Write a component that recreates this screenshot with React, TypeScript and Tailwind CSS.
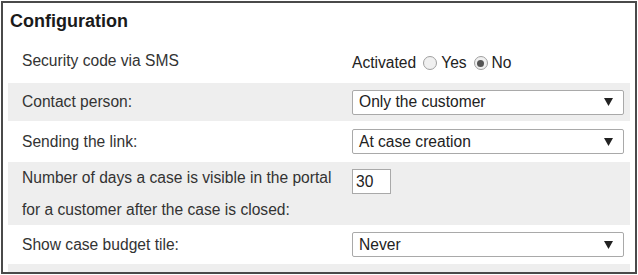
import React from 'react';

const Arrow = () => (
  <svg width="9" height="8" viewBox="0 0 9 8" className="shrink-0">
    <path d="M0 0 H9 L4.5 8 Z" fill="#222" />
  </svg>
);

const Select: React.FC<{ value: string }> = ({ value }) => (
  <div className="flex items-center justify-between w-[272px] h-[25px] pl-[6px] pr-[10px] bg-white border border-[#a9a9a9] rounded-[2px] text-[15.6px] text-[#222]">
    <span>{value}</span>
    <Arrow />
  </div>
);

const Radio: React.FC<{ checked?: boolean }> = ({ checked }) => (
  <span className="inline-flex items-center justify-center w-[14px] h-[14px] rounded-full border border-[#a0a0a0] bg-[#f0f0f0] ml-[7px] mr-[4px]">
    {checked && <span className="w-[7px] h-[7px] rounded-full bg-[#555]" />}
  </span>
);

export default function App() {
  return (
    <div className="w-[638px] h-[275px] bg-white p-px font-['Liberation_Sans',Arial,sans-serif]">
      <div className="h-[273px] border-2 border-[#4a4a4a] overflow-hidden">
        <div className="h-[36px] pl-[7px] pt-[5px] text-[18px] font-bold text-[#1a1a1a]">Configuration</div>
        <div className="mx-[5px] text-[15.6px] text-[#333]">
          <div className="flex h-[44px]">
            <div className="w-[344px] pl-[14px] pt-[10px]">Security code via SMS</div>
            <div className="flex items-center pt-[4px] text-[#222]">
              <span>Activated</span>
              <Radio />
              <span>Yes</span>
              <Radio checked />
              <span>No</span>
            </div>
          </div>
          <div className="flex items-center h-[38px] bg-[#eeeeee]">
            <div className="w-[344px] pl-[14px]">Contact person:</div>
            <Select value="Only the customer" />
          </div>
          <div className="flex items-center h-[41px]">
            <div className="w-[344px] pl-[14px]">Sending the link:</div>
            <Select value="At case creation" />
          </div>
          <div className="flex h-[63px] bg-[#eeeeee]">
            <div className="w-[344px] pl-[14px] leading-[32px]">
              Number of days a case is visible in the portal for a customer after the case is closed:
            </div>
            <div className="pt-[7px]">
              <div className="w-[39px] h-[25px] border border-[#a9a9a9] bg-white pl-[3px] text-[15.6px] leading-[23px] text-[#222]">30</div>
            </div>
          </div>
          <div className="flex items-center h-[39px]">
            <div className="w-[344px] pl-[14px]">Show case budget tile:</div>
            <Select value="Never" />
          </div>
          <div className="h-[20px] bg-[#eeeeee]" />
        </div>
      </div>
    </div>
  );
}
